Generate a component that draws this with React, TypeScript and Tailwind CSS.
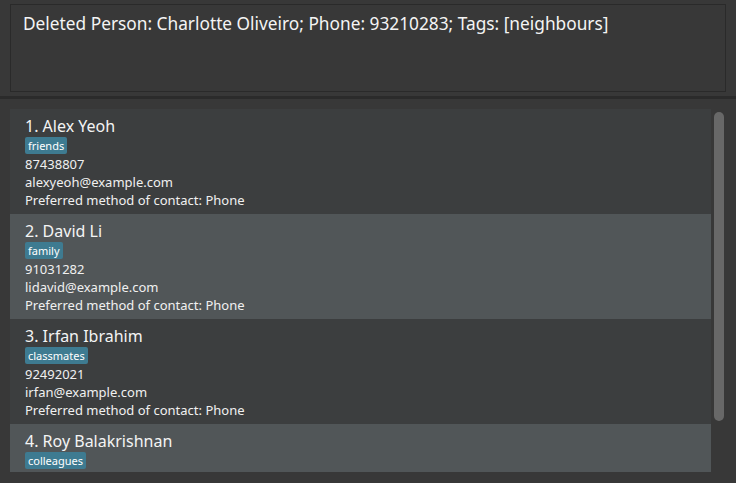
import React from "react";

interface Person {
  name: string;
  tag: string;
  phone: string;
  email: string;
  contact: string;
}

const persons: Person[] = [
  { name: "Alex Yeoh", tag: "friends", phone: "87438807", email: "alexyeoh@example.com", contact: "Phone" },
  { name: "David Li", tag: "family", phone: "91031282", email: "lidavid@example.com", contact: "Phone" },
  { name: "Irfan Ibrahim", tag: "classmates", phone: "92492021", email: "irfan@example.com", contact: "Phone" },
  { name: "Roy Balakrishnan", tag: "colleagues", phone: "92624417", email: "royb@example.com", contact: "Phone" },
];

const PersonCard = ({ person, index }: { person: Person; index: number }) => (
  <div
    className={`shrink-0 h-[105px] pl-[15px] pt-[7px] pb-[5px] ${
      index % 2 === 0 ? "bg-[#3c3e3f]" : "bg-[#515658]"
    }`}
  >
    <div className="text-[16px] leading-[20px] text-[#f4f4f4]">
      {index + 1}. {person.name}
    </div>
    <div className="mt-[1px] flex">
      <span className="h-[17px] px-[3px] rounded-[2px] bg-[#3e7b91] text-[11px] leading-[17px] text-white">
        {person.tag}
      </span>
    </div>
    <div className="mt-[1px] text-[13px] leading-[18px] text-[#f0f0f0]">
      <div>{person.phone}</div>
      <div>{person.email}</div>
      <div>Preferred method of contact: {person.contact}</div>
    </div>
  </div>
);

export default function App() {
  return (
    <div
      className="w-[736px] h-[483px] bg-[#383838] flex flex-col overflow-hidden"
      style={{ fontFamily: '"Noto Sans", "Open Sans", sans-serif' }}
    >
      <div className="pt-[4px] pl-[10px] pr-[10px]">
        <div className="h-[88px] border border-[#2a2a2a] px-[12px] pt-[7px] text-[17.3px] leading-[24px] text-[#f4f4f4]">
          Deleted Person: Charlotte Oliveiro; Phone: 93210283; Tags: [neighbours]
        </div>
      </div>
      <div className="mt-[4px] h-[3px] bg-[#2b2b2b]" />
      <div className="mt-[10px] flex pl-[10px] h-[363px]">
        <div className="w-[701px] flex flex-col overflow-hidden">
          {persons.map((p, i) => (
            <PersonCard key={p.name} person={p} index={i} />
          ))}
        </div>
        <div className="ml-[3px] w-[10px] pt-[3px]">
          <div className="h-[309px] rounded-full bg-[#686868]" />
        </div>
      </div>
    </div>
  );
}
